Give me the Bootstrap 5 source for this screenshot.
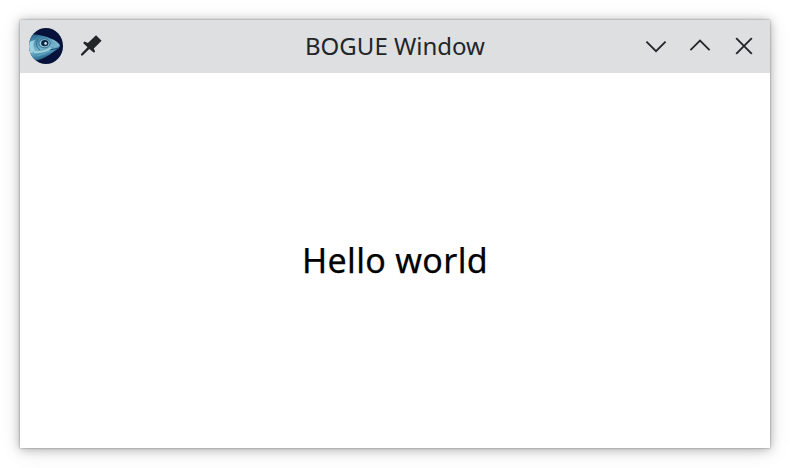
<!DOCTYPE html>
<html lang="en">
<head>
<meta charset="utf-8">
<meta name="viewport" content="width=device-width, initial-scale=1">
<title>BOGUE Window</title>
<link href="https://cdn.jsdelivr.net/npm/bootstrap@5.3.0/dist/css/bootstrap.min.css" rel="stylesheet">
<style>
body { font-family: "Noto Sans", sans-serif; padding: 20px; height: 468px; overflow: hidden; }
.app-window { height: 428px; box-shadow: 0 0 2px rgba(0,0,0,.38), 0 1px 10px rgba(0,0,0,.3), 0 3px 24px rgba(0,0,0,.09); }
.titlebar { display: grid; grid-template-columns: 1fr auto 1fr; height: 53px; background: #dedfe1; color: #232629; padding: 0 4px; }
.caption { font-size: 24px; line-height: 52px; white-space: nowrap; }
.win-btn { width: 44px; height: 52px; color: #232629; }
.tools { gap: 15px; height: 52px; padding-left: 5px; }
.greeting { font-size: 34px; line-height: 44px; letter-spacing: .33px; color: #000; padding-bottom: 2px; -webkit-text-stroke: .25px #000; }
svg { display: block; }
</style>
</head>
<body class="bg-white">
<main class="app-window bg-white d-flex flex-column">
  <header class="titlebar">
    <div class="tools d-flex align-items-center">
      <svg width="34" height="36" viewBox="0 0 34 36" role="img" aria-label="Fish logo">
        <defs>
          <clipPath id="disc"><ellipse cx="17" cy="18" rx="17" ry="18"/></clipPath>
          <linearGradient id="skin" x1="0" y1="0" x2=".35" y2="1">
            <stop offset="0" stop-color="#1d5076"/><stop offset=".3" stop-color="#4f93b5"/><stop offset=".6" stop-color="#75b2ca"/><stop offset=".8" stop-color="#4187a8"/><stop offset="1" stop-color="#123f65"/>
          </linearGradient>
          <filter id="soft"><feGaussianBlur stdDeviation=".65"/></filter>
        </defs>
        <g clip-path="url(#disc)">
          <rect width="34" height="36" fill="#06123a"/>
          <g filter="url(#soft)">
            <path d="M-2 6Q9 6 18 9Q27 12 31 17Q31 20 27 22Q21 27 13 31L-2 35Z" fill="url(#skin)"/>
            <path d="M0 14L6 12Q3 17 6 22L3 25H0Z" fill="#9bd0e0"/>
            <path d="M9 11Q5 18 11 22" fill="none" stroke="#2e708f" stroke-width="1"/>
            <path d="M5 24Q14 25 22 20" fill="none" stroke="#a0d1dc" stroke-width="2"/>
            <path d="M8 28Q16 26 23 22" fill="none" stroke="#63a5c0" stroke-width="1.2"/>
            <path d="M21 22L30 20" stroke="#1c4a70" stroke-width="1"/>
            <path d="M23 12Q28 14 29 17L25 19" fill="none" stroke="#7fb5ca" stroke-width="1.7"/>
            <ellipse cx="15.5" cy="15.3" rx="5.6" ry="4.5" fill="#94c6d7" stroke="#245977" stroke-width=".8"/>
          </g>
          <ellipse cx="15.8" cy="15.1" rx="3.7" ry="3.2" fill="#0b2847"/>
          <circle cx="16.6" cy="15.4" r="1.3" fill="#d8eef0"/>
        </g>
      </svg>
      <svg width="26" height="26" viewBox="0 0 26 26" role="img" aria-label="Pin window">
        <path d="M18 2.2L23.6 7.8L15.8 15.4L17.1 18.6L16 19.7L11.3 15.9L4.6 22.6L3 22.6L3 21L9.5 14.2L5.1 10L6.5 8.6L9.9 10.1Z" fill="#232629"/>
      </svg>
    </div>
    <div class="caption">BOGUE Window</div>
    <div class="d-flex justify-content-end">
      <button class="win-btn btn border-0 rounded-0 p-0 d-flex align-items-center justify-content-center" aria-label="Minimize">
        <svg width="24" height="24" viewBox="0 0 24 24" fill="none" stroke="currentColor" stroke-width="1.8"><path d="M2.4 7.6L12 17.2L21.6 7.6"/></svg>
      </button>
      <button class="win-btn btn border-0 rounded-0 p-0 d-flex align-items-center justify-content-center" aria-label="Maximize">
        <svg width="24" height="24" viewBox="0 0 24 24" fill="none" stroke="currentColor" stroke-width="1.8"><path d="M2.4 16.2L12 6.6L21.6 16.2"/></svg>
      </button>
      <button class="win-btn btn border-0 rounded-0 p-0 d-flex align-items-center justify-content-center" aria-label="Close">
        <svg width="24" height="24" viewBox="0 0 24 24" fill="none" stroke="currentColor" stroke-width="1.9"><path d="M4.2 4.2L19.8 19.8M19.8 4.2L4.2 19.8"/></svg>
      </button>
    </div>
  </header>
  <section class="flex-grow-1 d-flex align-items-center justify-content-center">
    <div class="greeting">Hello world</div>
  </section>
</main>
<script src="https://cdn.jsdelivr.net/npm/bootstrap@5.3.0/dist/js/bootstrap.bundle.min.js"></script>
</body>
</html>
